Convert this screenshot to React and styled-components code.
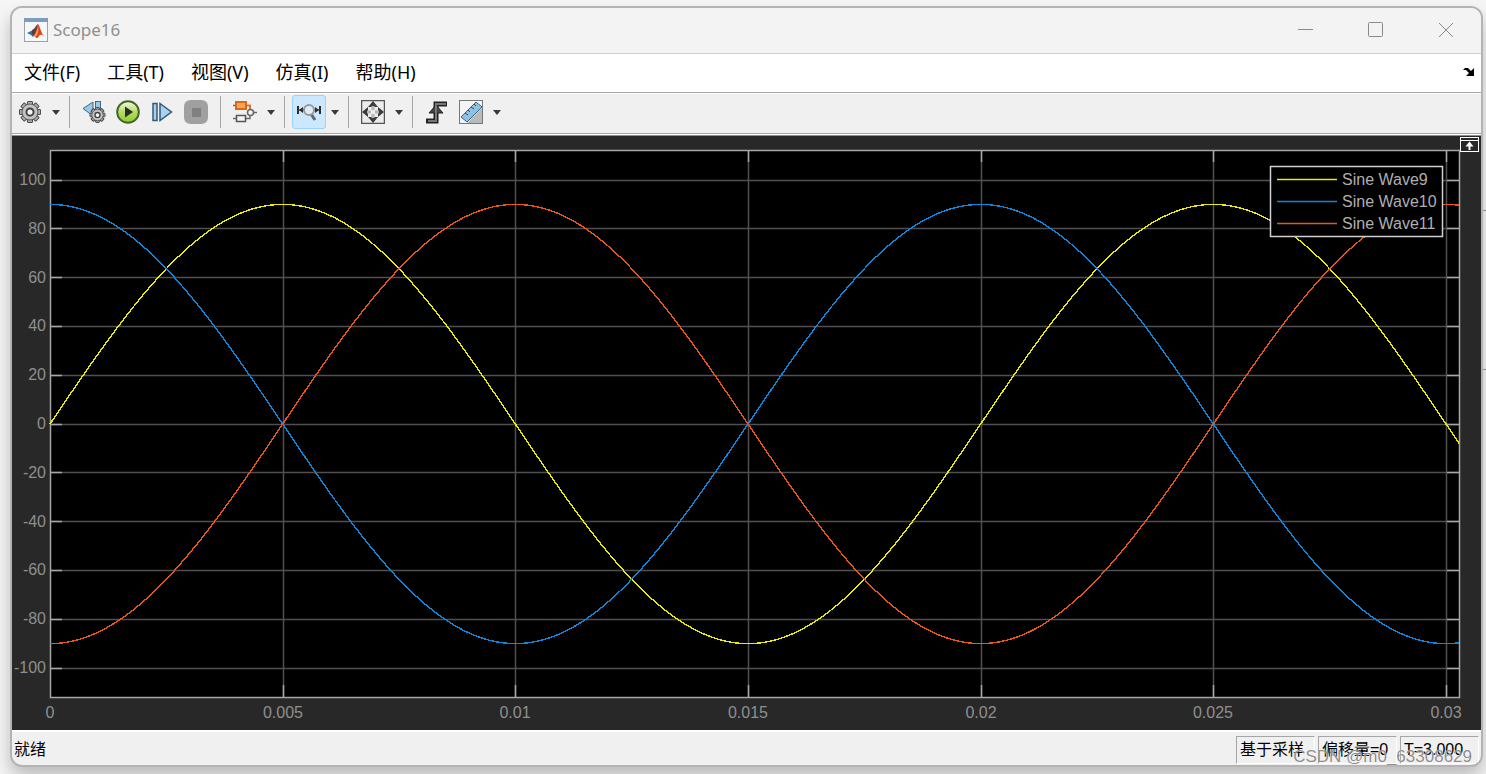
import React from 'react';
import styled, { createGlobalStyle } from 'styled-components';

const GlobalStyle = createGlobalStyle`
    * {
        box-sizing: border-box;
    }

    body {
        margin: 0;
        background: #f6f6f6;
        font-family: "Noto Sans", "Noto Sans CJK SC", sans-serif;
    }

    button {
        border: 0;
        padding: 0;
        background: none;
        font: inherit;
        color: inherit;
    }
`;

const Desktop = styled.div`
    position: relative;
    display: flex;
    min-height: 100vh;
    padding: 6px 3px 7px 10px;
    overflow: hidden;
`;

const Behind = styled.div`
    position: absolute;
    top: 210px;
    right: 0;
    width: 6px;
    height: 160px;
    border-top: 1px solid #9a9a9a;
    border-bottom: 1px solid #9a9a9a;
`;

const Window = styled.main`
    position: relative;
    flex: 1;
    min-width: 0;
    display: flex;
    flex-direction: column;
    border: 2px solid #b4b4b4;
    border-radius: 12px;
    background: #f0f0f0;
    box-shadow: 0 10px 18px rgba(0, 0, 0, 0.24);
    overflow: hidden;
`;

const TitleBar = styled.header`
    height: 46px;
    display: flex;
    align-items: center;
    padding: 0 0 2px 12px;
    background: #f3f3f3;
    border-bottom: 1px solid #cfcfcf;
`;

const Title = styled.h1`
    flex: 1;
    margin: 0 0 0 5px;
    font-size: 17px;
    line-height: 24px;
    font-weight: 400;
    color: #8f8f8f;
`;

const WindowButton = styled.button`
    width: 70px;
    height: 42px;
    display: flex;
    align-items: center;
    justify-content: center;
`;

const MenuBar = styled.nav`
    height: 39px;
    display: flex;
    align-items: center;
    gap: 27px;
    padding: 0 6px 2px 12px;
    background: #fff;
    border-bottom: 1px solid #a6a6a6;
`;

const MenuButton = styled.button`
    font-size: 18px;
    line-height: 24px;
    color: #000;
    white-space: nowrap;
`;

const DockButton = styled.button`
    display: flex;
    margin-left: auto;
`;

const Toolbar = styled.div`
    height: 43px;
    display: flex;
    align-items: center;
    padding: 0 1px 6px;
    background: #f0f0f0;
    border-top: 1px solid #fff;
    box-shadow: inset 0 -1px 0 #8e8e8e, inset 0 -2px 0 #fff, inset 0 -3px 0 #a6a6a6;
`;

const ToolButton = styled.button`
    width: 34px;
    height: 34px;
    display: flex;
    align-items: center;
    justify-content: center;
    border: 1px solid ${({ $active }) => ($active ? '#99d1ff' : 'transparent')};
    border-radius: 3px;
    background: ${({ $active }) => ($active ? '#cce8ff' : 'transparent')};
`;

const CaretButton = styled.button`
    width: 12px;
    height: 34px;
    margin-left: 3px;
    display: flex;
    align-items: center;
    justify-content: center;
`;

const Separator = styled.span`
    width: 1px;
    height: 32px;
    margin: 0 7px;
    background: #a6a6a6;
`;

const ScopeArea = styled.section`
    position: relative;
    flex: 1;
    background: #282828;
`;

const Chart = styled.svg`
    display: block;
    width: 100%;
    height: auto;
    font-family: "Liberation Sans", Arial, sans-serif;
    font-size: 16px;
`;

const MaximizeAxes = styled.button`
    position: absolute;
    top: 1px;
    right: 2px;
    display: flex;
`;

const StatusBar = styled.footer`
    height: 35px;
    display: flex;
    align-items: center;
    gap: 3px;
    padding: 2px 2px 0;
    border-top: 2px solid #fff;
    font-family: "Liberation Sans", "Noto Sans CJK SC", sans-serif;
    font-size: 16px;
    line-height: 20px;
    color: #000;
`;

const StatusText = styled.span`
    flex: 1;
`;

const StatusField = styled.span`
    width: 79px;
    height: 28px;
    padding: 3px;
    white-space: nowrap;
    border: 1px solid;
    border-color: #a6a6a6 #fff #fff #a6a6a6;
`;

const Watermark = styled.span`
    position: absolute;
    right: 14px;
    bottom: 7px;
    font-family: "Liberation Sans", Arial, sans-serif;
    font-size: 17px;
    line-height: 20px;
    color: rgba(120, 120, 120, 0.85);
    text-shadow: 0 0 1px #fff;
    pointer-events: none;
`;

const MatlabIcon = () => (
    <svg width="24" height="24" viewBox="0 0 24 24" aria-hidden="true">
        <rect x="0.5" y="0.5" width="23" height="23" fill="#f5f7f9" stroke="#9aa3ab" />
        <rect x="0" y="0" width="24" height="4" fill="#7c9dbd" />
        <path d="M3 15l6-3 3 3-3 4-2-2z" fill="#2f6fa5" />
        <path d="M8 12c3-1 4-5 6-6l-1 8-3 4-2-2z" fill="#5d3a4c" />
        <path d="M14 6c2 2 3 9 6 12-2-1-3-2-5 0-1 2-2 2-3 2-1-2-2-2-3-2 3-3 4-8 5-12z" fill="#d9431e" />
        <path d="M14 8c1 4 0 8-2 11-1-1-1-1-2-1 2-3 3-6 4-10z" fill="#f6a13a" />
    </svg>
);

const teeth = [0, 45, 90, 135, 180, 225, 270, 315];

const Gear = ({ cx, cy, r }) => (
    <g transform={`translate(${cx} ${cy})`}>
        {teeth.map((a) => (
            <rect key={a} x={-r * 0.24} y={-r} width={r * 0.48} height={r * 0.5} rx="0.5" fill="#ababab" stroke="#4b4b4b" strokeWidth="1" transform={`rotate(${a})`} />
        ))}
        <circle r={r * 0.76} fill="#bdbdbd" stroke="#4b4b4b" strokeWidth="0.8" />
        <circle r={r * 0.64} fill="#c4c4c4" />
        <circle r={r * 0.34} fill="#f2f2f2" stroke="#3f3f3f" strokeWidth={r * 0.18} />
    </g>
);

const Icon = ({ children }) => (
    <svg width="24" height="24" viewBox="0 0 24 24" fill="none" aria-hidden="true">{children}</svg>
);

const SettingsIcon = () => (
    <Icon><Gear cx={12} cy={12} r={10.5} /></Icon>
);

const StepBackIcon = () => (
    <Icon>
        <path d="M1 8.5L11 2v14z" fill="#9cc7e6" stroke="#3e6788" />
        <rect x="13.5" y="1.5" width="5" height="14" fill="#9cc7e6" stroke="#3e6788" />
        <Gear cx={15.5} cy={15} r={7.5} />
    </Icon>
);

const RunIcon = () => (
    <Icon>
        <defs>
            <linearGradient id="run" x1="0" y1="0" x2="0" y2="1">
                <stop offset="0" stopColor="#f2fadf" />
                <stop offset="0.5" stopColor="#b4dd63" />
                <stop offset="1" stopColor="#8ccb2c" />
            </linearGradient>
        </defs>
        <circle cx="12" cy="12" r="10.8" fill="url(#run)" stroke="#44652a" strokeWidth="2" />
        <path d="M9 6.5l8 5.5-8 5.5z" fill="#2b2b2b" />
    </Icon>
);

const StepIcon = () => (
    <Icon>
        <rect x="3" y="3.5" width="4" height="17" fill="#a9d0ec" stroke="#33597a" strokeWidth="1.5" />
        <path d="M10 3.5L21.5 12 10 20.5z" fill="#a9d0ec" stroke="#33597a" strokeWidth="1.5" />
    </Icon>
);

const StopIcon = () => (
    <Icon>
        <path d="M7 0h10q7 0 7 7v10q0 7-7 7H7q-7 0-7-7V7q0-7 7-7z" fill="#a0a0a0" />
        <rect x="8" y="8" width="9" height="9" fill="#808080" />
    </Icon>
);

const BlocksIcon = () => (
    <Icon>
        <path d="M0 5.5h3M0 18.5h3M13 18.5h4v-4M20 12.5h4" stroke="#6a6a6a" strokeWidth="1.5" />
        <path d="M13 5.5h4v4" stroke="#d9762b" strokeWidth="2" />
        <rect x="3" y="2" width="10" height="7" fill="#f9a34b" stroke="#d8681a" strokeWidth="2" />
        <rect x="3.5" y="15.5" width="9" height="6" fill="#f4f4f4" stroke="#555" strokeWidth="1.5" />
        <circle cx="17.5" cy="12.5" r="3" fill="#f4f4f4" stroke="#666" strokeWidth="1.5" />
    </Icon>
);

const ZoomIcon = () => (
    <Icon>
        <path d="M1 6v8M23 6v8" stroke="#2d2d2d" strokeWidth="2" />
        <path d="M2 10h5M17 10h5" stroke="#2d2d2d" />
        <path d="M2 10l4-3v6zM22 10l-4-3v6z" fill="#2d2d2d" />
        <path d="M14 14l4 6" stroke="#666" strokeWidth="3" />
        <circle cx="12" cy="10" r="5" fill="#dcecf8" stroke="#999" strokeWidth="2" />
    </Icon>
);

const FitIcon = () => (
    <Icon>
        <rect x="0.5" y="0.5" width="23" height="23" fill="#ececec" stroke="#555" strokeWidth="1.5" />
        <path d="M12 1l5 6H7zM12 23l5-6H7zM1 12l6-5v10zM23 12l-6-5v10z" fill="#3c3c3c" />
        <path d="M12 6v4M12 18v-4M6 12h4M18 12h-4" stroke="#b4b4b4" strokeWidth="3" />
    </Icon>
);

const TriggerIcon = () => (
    <Icon>
        <path d="M1 21h10V4h11" stroke="#222" strokeWidth="5" />
        <path d="M11 5l-7 8h14z" fill="#444" stroke="#222" />
        <path d="M3 21h8V4h10" stroke="#777" strokeWidth="2" />
    </Icon>
);

const RulerIcon = () => (
    <Icon>
        <rect x="0.5" y="0.5" width="23" height="23" fill="#f4f4f4" stroke="#777" />
        <path d="M23 8v15H8z" fill="#b9b9b9" />
        <path d="M2 17L17 2l6 5L8 22z" fill="#8fc2e2" stroke="#3b6580" />
        <path d="M6 13l3 2M9 10l2 2M12 7l3 2M15 4l2 2" stroke="#2d4b60" />
    </Icon>
);

const Caret = ({ label }) => (
    <CaretButton aria-label={label}>
        <svg width="8" height="5" viewBox="0 0 8 5" aria-hidden="true">
            <path d="M0 0h8L4 5z" fill="#3a3a3a" />
        </svg>
    </CaretButton>
);

const menus = ['文件(F)', '工具(T)', '视图(V)', '仿真(I)', '帮助(H)'];

const amplitude = 90;
const period = 0.02;

const signals = [
    { name: 'Sine Wave9', color: '#ecec00', phase: 0 },
    { name: 'Sine Wave10', color: '#0c88e0', phase: Math.PI / 2 },
    { name: 'Sine Wave11', color: '#e8561c', phase: -Math.PI / 2 },
];

const plot = { left: 38, top: 14, right: 1447, bottom: 561 };
const xTicks = [0, 0.005, 0.01, 0.015, 0.02, 0.025, 0.03];
const yTicks = [100, 80, 60, 40, 20, 0, -20, -40, -60, -80, -100];

const scaleX = 46533;
const toX = (t) => Math.round(plot.left + t * scaleX);
const toY = (v) => 288 - v * 2.44;

const wavePath = (phase) => {
    const points = [];
    for (let x = plot.left; x <= plot.right; x += 1) {
        const t = (x - plot.left) / scaleX;
        const y = toY(amplitude * Math.sin((2 * Math.PI * t) / period + phase));
        points.push(`${x},${y.toFixed(2)}`);
    }
    return `M${points.join('L')}`;
};

const ScopeChart = () => (
    <Chart viewBox="0 0 1469 594" role="img" aria-label="Sine waves">
        <rect x={plot.left} y={plot.top} width={plot.right - plot.left} height={plot.bottom - plot.top} fill="#000" />
        <g fill="none" strokeWidth="1.5">
            {xTicks.slice(1).map((t) => (
                <g key={t}>
                    <path d={`M${toX(t) + 0.5} ${plot.top}V${plot.bottom}`} stroke="#505050" />
                    <path d={`M${toX(t) + 0.5} ${plot.top}v12M${toX(t) + 0.5} ${plot.bottom}v-12`} stroke="#a6a6a6" />
                </g>
            ))}
            {yTicks.map((v) => (
                <g key={v}>
                    <path d={`M${plot.left} ${Math.floor(toY(v)) + 0.5}H${plot.right}`} stroke="#505050" />
                    <path d={`M${plot.left} ${Math.floor(toY(v)) + 0.5}h12M${plot.right} ${Math.floor(toY(v)) + 0.5}h-12`} stroke="#a6a6a6" />
                </g>
            ))}
            <rect x={plot.left + 0.5} y={plot.top + 0.5} width={plot.right - plot.left} height={plot.bottom - plot.top} stroke="#a6a6a6" />
        </g>
        <g fill="none" strokeWidth="1.4" shapeRendering="crispEdges">
            {signals.map(({ name, color, phase }) => (
                <path key={name} d={wavePath(phase)} stroke={color} />
            ))}
        </g>
        <g fill="#8f8f8f">
            {yTicks.map((v) => (
                <text key={v} x="34" y={toY(v) + 5} textAnchor="end">{v}</text>
            ))}
            {xTicks.map((t) => (
                <text key={t} x={toX(t)} y="582" textAnchor="middle">{t}</text>
            ))}
        </g>
        <rect x="1258.5" y="30.5" width="172" height="70" fill="#000" stroke="#d0d0d0" strokeWidth="1.5" />
        {signals.map(({ name, color }, i) => (
            <g key={name}>
                <path d={`M1265 ${43.5 + i * 22}h60`} stroke={color} strokeWidth="1.5" />
                <text x="1330" y={49 + i * 22} fill="#afafaf">{name}</text>
            </g>
        ))}
    </Chart>
);

const App = () => {
    return (
        <Desktop>
            <GlobalStyle />
            <Behind />
            <Window>
                <TitleBar>
                    <MatlabIcon />
                    <Title>Scope16</Title>
                    <WindowButton aria-label="Minimize">
                        <svg width="16" height="16" stroke="#8a8a8a"><path d="M0 7.5h15" /></svg>
                    </WindowButton>
                    <WindowButton aria-label="Maximize">
                        <svg width="16" height="16" fill="none" stroke="#8a8a8a"><rect x="0.5" y="0.5" width="14" height="14" rx="1" /></svg>
                    </WindowButton>
                    <WindowButton aria-label="Close">
                        <svg width="16" height="16" stroke="#8a8a8a"><path d="M1 1l14 14M15 1L1 15" /></svg>
                    </WindowButton>
                </TitleBar>
                <MenuBar>
                    {menus.map((menu) => (
                        <MenuButton key={menu}>{menu}</MenuButton>
                    ))}
                    <DockButton aria-label="Dock">
                        <svg width="12" height="10" viewBox="0 0 12 10">
                            <path d="M0 3L2 1h3l3 3 3-3v8H3l3-3-3-3z" fill="#000" />
                        </svg>
                    </DockButton>
                </MenuBar>
                <Toolbar>
                    <ToolButton aria-label="Settings"><SettingsIcon /></ToolButton>
                    <Caret label="Settings options" />
                    <Separator />
                    <ToolButton aria-label="Step back"><StepBackIcon /></ToolButton>
                    <ToolButton aria-label="Run"><RunIcon /></ToolButton>
                    <ToolButton aria-label="Step forward"><StepIcon /></ToolButton>
                    <ToolButton aria-label="Stop"><StopIcon /></ToolButton>
                    <Separator />
                    <ToolButton aria-label="Highlight block"><BlocksIcon /></ToolButton>
                    <Caret label="Highlight options" />
                    <Separator />
                    <ToolButton aria-label="Zoom X" $active><ZoomIcon /></ToolButton>
                    <Caret label="Zoom options" />
                    <Separator />
                    <ToolButton aria-label="Scale axes"><FitIcon /></ToolButton>
                    <Caret label="Scale options" />
                    <Separator />
                    <ToolButton aria-label="Triggers"><TriggerIcon /></ToolButton>
                    <ToolButton aria-label="Measurements"><RulerIcon /></ToolButton>
                    <Caret label="Measurement options" />
                </Toolbar>
                <ScopeArea>
                    <ScopeChart />
                    <MaximizeAxes aria-label="Maximize axes">
                        <svg width="19" height="15" fill="none" stroke="#fff">
                            <rect x="0.5" y="0.5" width="18" height="14" fill="#282828" />
                            <path d="M0 3.5h19" />
                            <path d="M9.5 6v7" strokeWidth="2" />
                            <path d="M9.5 4.5l4 5h-8z" fill="#fff" stroke="none" />
                        </svg>
                    </MaximizeAxes>
                </ScopeArea>
                <StatusBar>
                    <StatusText>就绪</StatusText>
                    <StatusField>基于采样</StatusField>
                    <StatusField>偏移量=0</StatusField>
                    <StatusField>T=3.000</StatusField>
                </StatusBar>
            </Window>
            <Watermark>CSDN @m0_63308629</Watermark>
        </Desktop>
    );
};

export default App;
